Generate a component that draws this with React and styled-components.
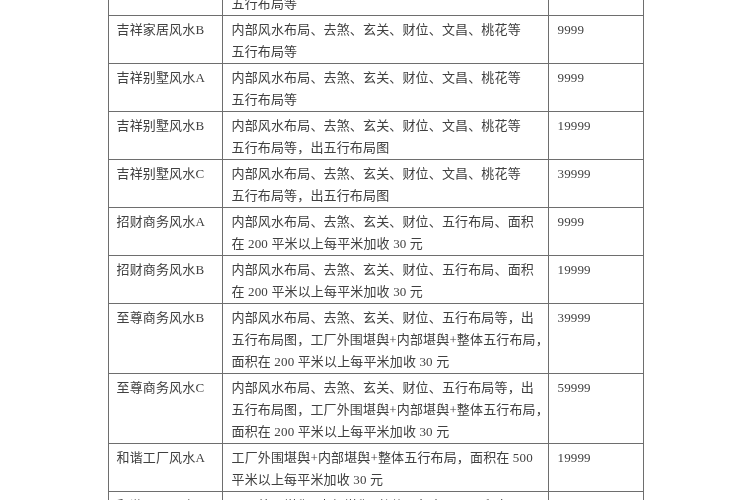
import React from "react";
import styled, { createGlobalStyle } from "styled-components";

const Global = createGlobalStyle`
  html, body { margin: 0; padding: 0; background: #ffffff; overflow: hidden; }
  body { font-family: "Liberation Serif", "Noto Sans CJK SC", serif; }
`;

const Page = styled.div`
  width: 750px;
  height: 500px;
  overflow: hidden;
  display: flex;
  justify-content: center;
  align-items: flex-start;
`;

const Table = styled.table`
  margin-top: -33px;
  margin-left: 1px;
  border-collapse: collapse;
  table-layout: fixed;
  width: 535px;
  filter: blur(0.6px);
  color: #404040;
  font-size: 13px;
  letter-spacing: 0.15px;
`;

const Cell = styled.td`
  border: 1px solid #6e6e6e;
  vertical-align: top;
  padding: 3px 4px 0 ${(p) => p.$pl || 8}px;
  line-height: 22px;
  white-space: nowrap;
  overflow: hidden;
`;

const Line = styled.div`
  height: 22px;
`;

const rows = [
  ["吉祥家居风水A", ["内部风水布局、去煞、玄关、财位、文昌、桃花等", "五行布局等"], "6999"],
  ["吉祥家居风水B", ["内部风水布局、去煞、玄关、财位、文昌、桃花等", "五行布局等"], "9999"],
  ["吉祥别墅风水A", ["内部风水布局、去煞、玄关、财位、文昌、桃花等", "五行布局等"], "9999"],
  ["吉祥别墅风水B", ["内部风水布局、去煞、玄关、财位、文昌、桃花等", "五行布局等，出五行布局图"], "19999"],
  ["吉祥别墅风水C", ["内部风水布局、去煞、玄关、财位、文昌、桃花等", "五行布局等，出五行布局图"], "39999"],
  ["招财商务风水A", ["内部风水布局、去煞、玄关、财位、五行布局、面积", "在 200 平米以上每平米加收 30 元"], "9999"],
  ["招财商务风水B", ["内部风水布局、去煞、玄关、财位、五行布局、面积", "在 200 平米以上每平米加收 30 元"], "19999"],
  ["至尊商务风水B", ["内部风水布局、去煞、玄关、财位、五行布局等，出", "五行布局图，工厂外围堪舆+内部堪舆+整体五行布局，", "面积在 200 平米以上每平米加收 30 元"], "39999"],
  ["至尊商务风水C", ["内部风水布局、去煞、玄关、财位、五行布局等，出", "五行布局图，工厂外围堪舆+内部堪舆+整体五行布局，", "面积在 200 平米以上每平米加收 30 元"], "59999"],
  ["和谐工厂风水A", ["工厂外围堪舆+内部堪舆+整体五行布局，面积在 500", "平米以上每平米加收 30 元"], "19999"],
  ["和谐工厂风水B", ["工厂外围堪舆+内部堪舆+整体五行布局，面积在 500", "平米以上每平米加收 30 元"], "39999"],
];

export default function App() {
  return (
    <>
      <Global />
      <Page>
        <Table>
          <colgroup>
            <col style={{ width: "114px" }} />
            <col style={{ width: "326px" }} />
            <col style={{ width: "95px" }} />
          </colgroup>
          <tbody>
            {rows.map(([name, desc, price]) => (
              <tr key={name}>
                <Cell $pl={8}>{name}</Cell>
                <Cell $pl={9}>
                  {desc.map((d, i) => (
                    <Line key={i}>{d}</Line>
                  ))}
                </Cell>
                <Cell $pl={9}>{price}</Cell>
              </tr>
            ))}
          </tbody>
        </Table>
      </Page>
    </>
  );
}
